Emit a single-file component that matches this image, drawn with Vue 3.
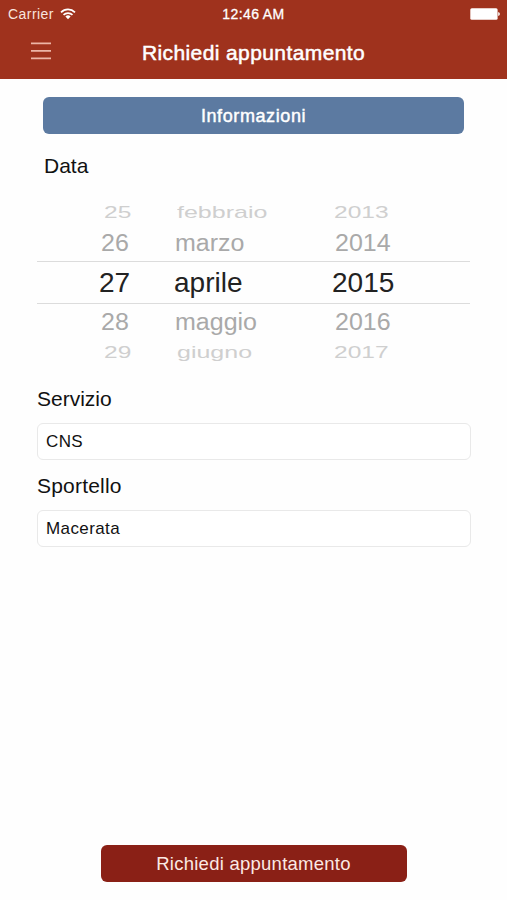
<template>
  <div class="screen">
    <header class="header">
      <div class="status-bar">
        <div class="carrier">
          <span>Carrier</span>
          <svg class="wifi" width="16" height="12" viewBox="0 0 16 12">
            <path d="M1 4.3a10 10 0 0 1 14 0M3.5 6.9a6.4 6.4 0 0 1 9 0" fill="none" stroke="#fff" stroke-width="1.7" />
            <path d="M5.4 8.6a3.7 3.7 0 0 1 5.2 0L8 11.3z" fill="#fff" />
          </svg>
        </div>
        <span class="clock">12:46 AM</span>
        <svg class="battery" width="31" height="12" viewBox="0 0 31 12">
          <rect x="1.3" y="0.3" width="27.3" height="11.4" rx="1.5" fill="#fff" />
          <path d="M29.2 4q1.7.5 1.7 2t-1.7 2z" fill="#fff" />
        </svg>
      </div>
      <div class="nav-bar">
        <button class="menu-btn" aria-label="Menu">
          <svg width="20" height="18" viewBox="0 0 20 18">
            <path d="M0 1.3h20M0 8.8h20M0 16.3h20" stroke="#edb5a6" stroke-width="1.7" />
          </svg>
        </button>
        <h1>Richiedi appuntamento</h1>
      </div>
    </header>

    <main class="content">
      <button class="info-btn">Informazioni</button>
      <label class="date-label">Data</label>

      <!-- date wheel -->
      <div class="picker">
        <div v-for="row in rows" :key="row.day" class="picker-row" :class="row.type">
          <span class="day"><i>{{ row.day }}</i></span>
          <span class="month"><i>{{ row.month }}</i></span>
          <span class="year"><i>{{ row.year }}</i></span>
        </div>
      </div>

      <label class="field-label">Servizio</label>
      <input v-model="service" class="field" type="text" />
      <label class="field-label second">Sportello</label>
      <input v-model="office" class="field" type="text" />
    </main>

    <button class="submit-btn">Richiedi appuntamento</button>
  </div>
</template>

<script setup>
import { ref } from 'vue';

const service = ref('CNS');
const office = ref('Macerata');

const rows = [
  { day: 25, month: 'febbraio', year: 2013, type: 'far' },
  { day: 26, month: 'marzo', year: 2014, type: 'near' },
  { day: 27, month: 'aprile', year: 2015, type: 'selected' },
  { day: 28, month: 'maggio', year: 2016, type: 'near' },
  { day: 29, month: 'giugno', year: 2017, type: 'far bottom' },
];
</script>

<style>
body {
  margin: 0;
  background: #fff;
}
</style>

<style scoped>
.screen {
  display: flex;
  flex-direction: column;
  box-sizing: border-box;
  width: 507px;
  height: 900px;
  padding-bottom: 18px;
  overflow: hidden;
  background: #fefefe;
  color: #111;
  font-family: "Liberation Sans", Arial, sans-serif;
}

button {
  padding: 0;
  border: 0;
  font-family: inherit;
}

.header {
  height: 79px;
  background: #9f321d;
  color: #fff;
}

.status-bar {
  display: grid;
  grid-template-columns: 1fr auto 1fr;
  align-items: center;
  height: 27px;
  padding: 0 7px 0 8px;
  font-size: 14px;
}

.carrier {
  display: flex;
  align-items: center;
  gap: 6px;
  color: #f8e4df;
  letter-spacing: 0.45px;
}

.clock {
  margin-right: 1px;
  font-size: 14px;
  letter-spacing: 0.4px;
  -webkit-text-stroke: 0.3px #fff;
}

.battery {
  justify-self: end;
}

.nav-bar {
  display: grid;
  grid-template-columns: 51px 1fr 51px;
  align-items: center;
  height: 52px;
}

.menu-btn {
  display: flex;
  width: 20px;
  margin: 0 0 5px 31px;
  background: none;
}

h1 {
  margin: 0;
  text-align: center;
  font-size: 21px;
  font-weight: 400;
  line-height: 52px;
  letter-spacing: 0.4px;
  -webkit-text-stroke: 0.5px #fff;
}

.content {
  display: flex;
  flex-direction: column;
  flex: 1;
  padding: 18px 37px 0;
}

.info-btn {
  height: 37px;
  margin: 0 6px;
  padding-top: 1px;
  border-radius: 6px;
  background: #5c7aa1;
  color: #fff;
  font-size: 18px;
  letter-spacing: 0.6px;
  -webkit-text-stroke: 0.45px #fff;
}

.date-label {
  margin: 20px 0 0 7px;
  font-size: 21px;
  line-height: 24px;
}

.picker {
  margin-top: 21px;
}

.picker-row {
  display: grid;
  grid-template-columns: 137px 158px 1fr;
  align-items: center;
  color: #a9a9a9;
  font-size: 25px;
}

.picker-row i {
  display: inline-block;
  font-style: normal;
  transform-origin: left center;
}

.near {
  height: 36px;
  line-height: 36px;
}

.near i {
  transform: scaleY(0.93);
}

.near .day {
  padding-left: 64px;
}

.near .month {
  padding-left: 1px;
}

.near .year {
  padding-left: 3px;
}

.far {
  height: 26px;
  color: #cfcfcf;
  line-height: 26px;
}

.far .day {
  padding-left: 67px;
}

.far .month {
  padding-left: 3px;
}

.far .year {
  padding-left: 2px;
}

.far i {
  transform: scaleY(0.64);
}

.far .day i,
.far .year i {
  transform: scale(0.98, 0.64);
}

.bottom {
  height: 24px;
  line-height: 24px;
}

.selected {
  box-sizing: border-box;
  height: 43px;
  border-top: 1px solid #dcdcdc;
  border-bottom: 1px solid #dcdcdc;
  color: #222;
  font-size: 28px;
  line-height: 41px;
}

.selected .day {
  padding-left: 62px;
}

.field-label {
  margin-top: 23px;
  font-size: 21px;
  line-height: 24px;
}

.field-label.second {
  margin-top: 14px;
  letter-spacing: 0.2px;
}

.field {
  box-sizing: border-box;
  width: 434px;
  height: 37px;
  margin-top: 12px;
  padding: 1px 8px 0;
  border: 1px solid #e9e9e9;
  border-radius: 6px;
  outline: 0;
  background: #fff;
  color: #111;
  font-family: inherit;
  font-size: 17px;
  letter-spacing: 0.4px;
}

.submit-btn {
  align-self: center;
  width: 306px;
  height: 37px;
  padding-top: 1px;
  border-radius: 6px;
  background: #8a2016;
  color: #fbe9e4;
  font-size: 18.5px;
  letter-spacing: 0.25px;
}
</style>
